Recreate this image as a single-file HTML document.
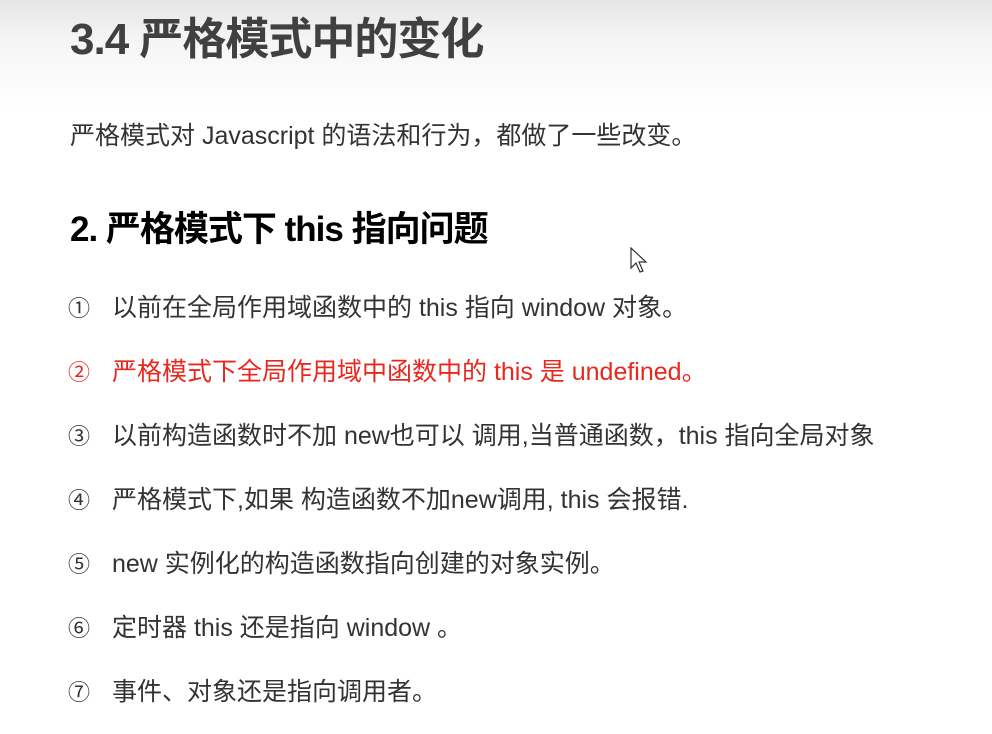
<!DOCTYPE html>
<html><head><meta charset="utf-8"><style>
body{margin:0;width:992px;height:734px;overflow:hidden;background:#fff;font-family:"Liberation Sans","Noto Sans CJK SC",sans-serif;position:relative}
.top{position:absolute;left:0;top:0;width:992px;height:110px;background:linear-gradient(#e6e6e6,#f6f6f6 40%,#fff)}
.t{position:absolute;white-space:nowrap}
h1{position:absolute;left:70px;top:12px;margin:0;font-size:44px;line-height:56px;font-weight:bold;color:#404040;letter-spacing:-1px}
.p{left:70px;top:120px;font-size:25px;line-height:32px;color:#333;letter-spacing:0}
h2{position:absolute;left:70px;top:208px;margin:0;font-size:35px;line-height:44px;font-weight:bold;color:#000;letter-spacing:-1px}
.li{left:68px;font-size:25px;line-height:32px;color:#333;letter-spacing:0}
.li span{display:inline-block;width:44px;font-size:22px}
.red{color:#e8281e}
</style></head><body>
<div class="top"></div>
<h1>3.4 严格模式中的变化</h1>
<div class="t p">严格模式对 Javascript 的语法和行为，都做了一些改变。</div>
<h2>2. 严格模式下 this 指向问题</h2>
<svg style="position:absolute;left:630px;top:247px" width="20" height="28"><path d="M1 1 L1 21 L6 16 L10 25 L13 24 L9 15 L16 15 Z" fill="#fff" stroke="#333" stroke-width="1.2"/></svg>
<div class="t li" style="top:292px"><span>①</span>以前在全局作用域函数中的 this 指向 window 对象。</div>
<div class="t li red" style="top:356px"><span>②</span>严格模式下全局作用域中函数中的 this 是 undefined。</div>
<div class="t li" style="top:420px"><span>③</span>以前构造函数时不加 new也可以 调用,当普通函数，this 指向全局对象</div>
<div class="t li" style="top:484px"><span>④</span>严格模式下,如果 构造函数不加new调用, this 会报错.</div>
<div class="t li" style="top:548px"><span>⑤</span>new 实例化的构造函数指向创建的对象实例。</div>
<div class="t li" style="top:612px"><span>⑥</span>定时器 this 还是指向 window 。</div>
<div class="t li" style="top:676px"><span>⑦</span>事件、对象还是指向调用者。</div>
</body></html>
